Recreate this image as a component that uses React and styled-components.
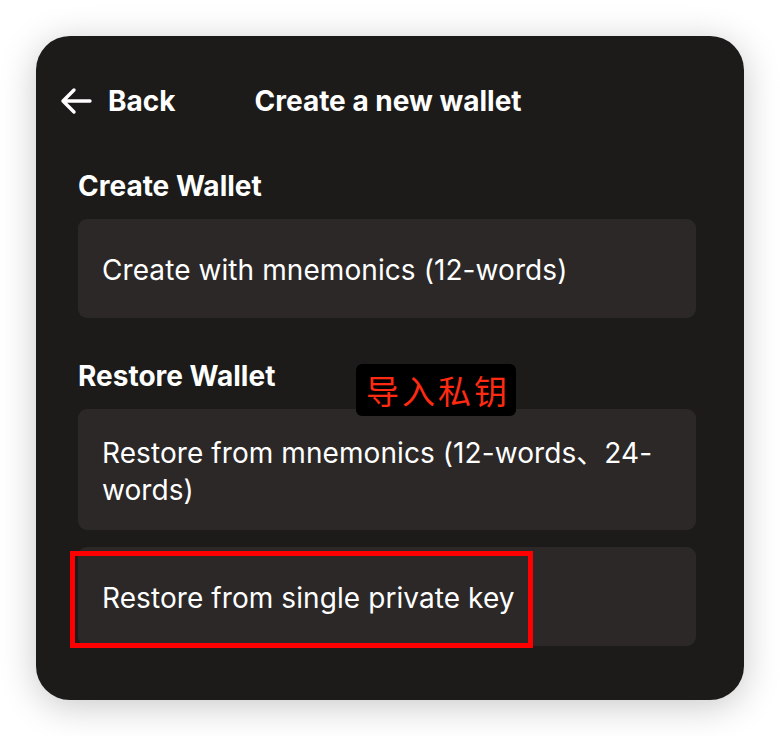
import styled, { createGlobalStyle } from "styled-components";

const GlobalStyle = createGlobalStyle`
  body {
    margin: 0;
    background: #ffffff;
    font-family: Inter, "Noto Sans", "Noto Sans CJK SC", sans-serif;
  }
`;

export default function App() {
  return (
    <>
      <GlobalStyle />
      <Page>
        <Panel>
          <Header>
            <BackButton>
              <svg width="32" height="28" viewBox="0 0 32 28" fill="none">
                <path
                  d="M30 14H3M14 3L3 14L14 25"
                  stroke="#ffffff"
                  strokeWidth="3.4"
                  strokeLinecap="round"
                  strokeLinejoin="round"
                />
              </svg>
              Back
            </BackButton>
            <Title>Create a new wallet</Title>
          </Header>

          <Section>
            <SectionTitle>Create Wallet</SectionTitle>
            <Option>Create with mnemonics (12-words)</Option>
          </Section>

          <Section $gap={41}>
            <SectionTitle>Restore Wallet</SectionTitle>
            <Option $tall>Restore from mnemonics (12-words、24-words)</Option>
            <Option>Restore from single private key</Option>
          </Section>

          <Label>导入私钥</Label>
          <Highlight />
        </Panel>
      </Page>
    </>
  );
}

const Page = styled.div`
  padding: 36px;
  width: 708px;
`;

const Panel = styled.div`
  position: relative;
  box-sizing: border-box;
  width: 708px;
  height: 664px;
  padding: 48px 48px 0 42px;
  background: #1c1b19;
  border-radius: 34px;
  box-shadow: 0 6px 36px rgba(0, 0, 0, 0.22);
  color: #ffffff;
`;

const Header = styled.div`
  display: flex;
  align-items: center;
  gap: 79px;
  margin-left: -18px;
  height: 34px;
`;

const BackButton = styled.div`
  display: flex;
  align-items: center;
  gap: 16px;
  font-size: 28px;
  font-weight: 700;
  line-height: 34px;
`;

const Title = styled.div`
  font-size: 28px;
  font-weight: 700;
  line-height: 34px;
`;

const Section = styled.div`
  display: flex;
  flex-direction: column;
  gap: 17px;
  margin-top: ${(p) => (p.$gap ? p.$gap : 51)}px;
`;

const SectionTitle = styled.div`
  font-size: 28px;
  font-weight: 700;
  line-height: 34px;
  margin-bottom: -1px;
`;

const Option = styled.div`
  box-sizing: border-box;
  display: flex;
  align-items: center;
  min-height: ${(p) => (p.$tall ? 121 : 99)}px;
  padding: 16px 30px 12px 24px;
  background: #2b2827;
  border-radius: 9px;
  font-size: 28px;
  line-height: 37px;
  letter-spacing: 0.08px;
`;

const Label = styled.div`
  position: absolute;
  left: 320px;
  top: 328px;
  padding: 0 6px 0 10px;
  background: #000000;
  border-radius: 6px;
  color: #ff2a12;
  font-family: "Noto Sans CJK SC", sans-serif;
  font-size: 33px;
  font-weight: 400;
  line-height: 52px;
  letter-spacing: 3px;
`;

const Highlight = styled.div`
  position: absolute;
  left: 34px;
  top: 515px;
  width: 463px;
  height: 97px;
  box-sizing: border-box;
  border: 5px solid #ff0000;
`;
